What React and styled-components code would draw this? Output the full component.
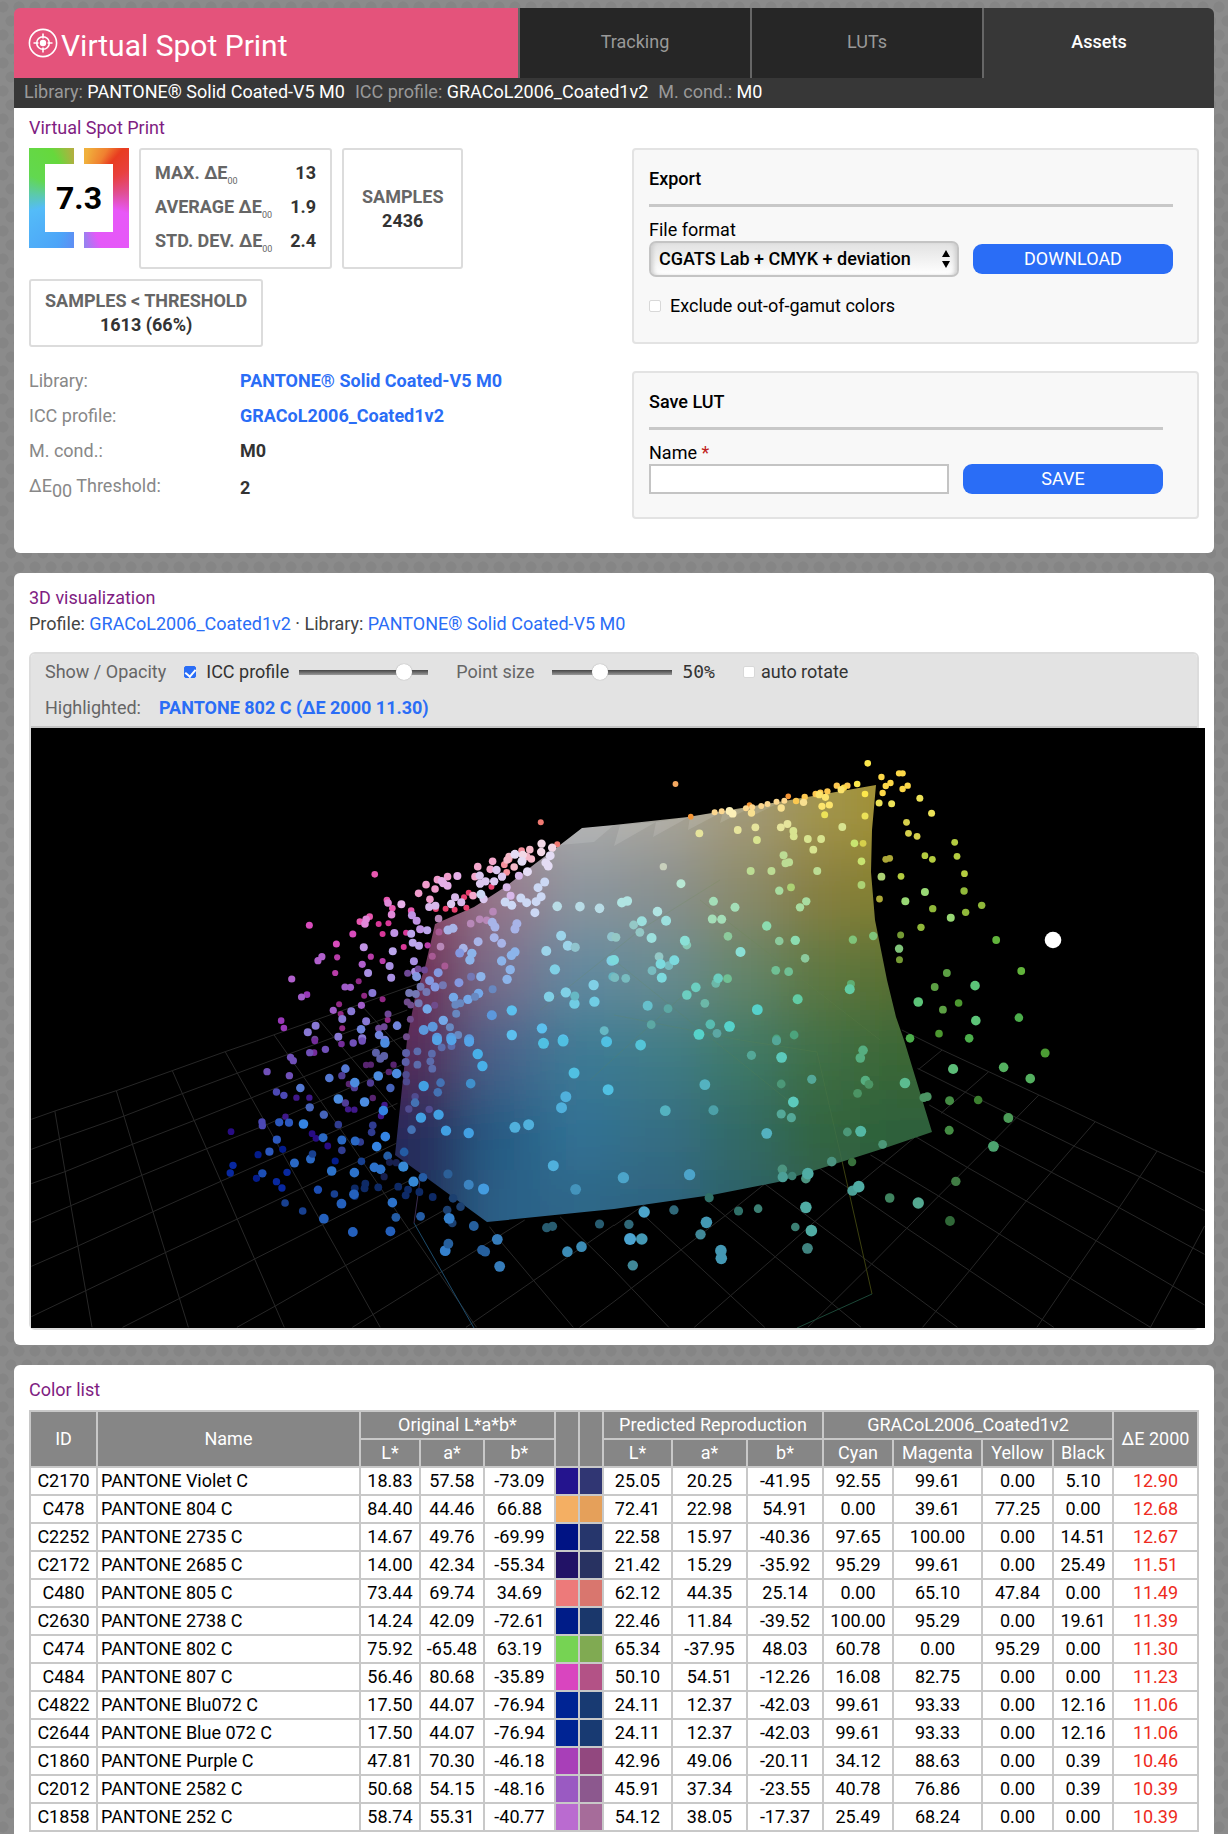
import React, { useState } from 'react'
import styled, { createGlobalStyle, css } from 'styled-components'

const GlobalStyle = createGlobalStyle`
    *{
        box-sizing: border-box;
    }
    body{
        margin: 0;
        font-family: Roboto, 'Liberation Sans', sans-serif;
        font-size: 18px;
        line-height: 26px;
        color: #000;
        background-color: #8b8b8b;
        background-image:
            radial-gradient(circle at 3px 14px, #858585 5px, transparent 6px),
            radial-gradient(circle at 19px 14px, #858585 5px, transparent 6px),
            radial-gradient(circle at 11px 0px, #858585 5px, transparent 6px),
            radial-gradient(circle at 11px 28px, #858585 5px, transparent 6px);
        background-size: 16px 28px;
        background-position: 0 -7px;
    }
    h1, h2, h3, p, dl, dd{
        margin: 0;
        font-weight: 400;
    }
    button, input, select{
        font: inherit;
    }
`

/* ---------- data ---------- */

const tabs = ['Tracking', 'LUTs', 'Assets']

const deltaStats = [
    { label: 'MAX. ΔE', value: '13' },
    { label: 'AVERAGE ΔE', value: '1.9' },
    { label: 'STD. DEV. ΔE', value: '2.4' },
]

const colors = [
    ['C2170', 'PANTONE Violet C', '18.83', '57.58', '-73.09', '#24148e', '#303673', '25.05', '20.25', '-41.95', '92.55', '99.61', '0.00', '5.10', '12.90'],
    ['C478', 'PANTONE 804 C', '84.40', '44.46', '66.88', '#f4af63', '#e5a05a', '72.41', '22.98', '54.91', '0.00', '39.61', '77.25', '0.00', '12.68'],
    ['C2252', 'PANTONE 2735 C', '14.67', '49.76', '-69.99', '#001384', '#26366c', '22.58', '15.97', '-40.36', '97.65', '100.00', '0.00', '14.51', '12.67'],
    ['C2172', 'PANTONE 2685 C', '14.00', '42.34', '-55.34', '#221266', '#283261', '21.42', '15.29', '-35.92', '95.29', '99.61', '0.00', '25.49', '11.51'],
    ['C480', 'PANTONE 805 C', '73.44', '69.74', '34.69', '#ed7a7a', '#d9766e', '62.12', '44.35', '25.14', '0.00', '65.10', '47.84', '0.00', '11.49'],
    ['C2630', 'PANTONE 2738 C', '14.24', '42.09', '-72.61', '#001c88', '#1a376b', '22.46', '11.84', '-39.52', '100.00', '95.29', '0.00', '19.61', '11.39'],
    ['C474', 'PANTONE 802 C', '75.92', '-65.48', '63.19', '#76d353', '#80aa52', '65.34', '-37.95', '48.03', '60.78', '0.00', '95.29', '0.00', '11.30'],
    ['C484', 'PANTONE 807 C', '56.46', '80.68', '-35.89', '#d945bf', '#b35286', '50.10', '54.51', '-12.26', '16.08', '82.75', '0.00', '0.00', '11.23'],
    ['C4822', 'PANTONE Blu072 C', '17.50', '44.07', '-76.94', '#002494', '#183a72', '24.11', '12.37', '-42.03', '99.61', '93.33', '0.00', '12.16', '11.06'],
    ['C2644', 'PANTONE Blue 072 C', '17.50', '44.07', '-76.94', '#002494', '#183a72', '24.11', '12.37', '-42.03', '99.61', '93.33', '0.00', '12.16', '11.06'],
    ['C1860', 'PANTONE Purple C', '47.81', '70.30', '-46.18', '#a83fb8', '#92487f', '42.96', '49.06', '-20.11', '34.12', '88.63', '0.00', '0.39', '10.46'],
    ['C2012', 'PANTONE 2582 C', '50.68', '54.15', '-48.16', '#9a5ac2', '#8c588e', '45.91', '37.34', '-23.55', '40.78', '76.86', '0.00', '0.39', '10.39'],
    ['C1858', 'PANTONE 252 C', '58.74', '55.31', '-40.77', '#ba6bd0', '#a66c9a', '54.12', '38.05', '-17.37', '25.49', '68.24', '0.00', '0.00', '10.39'],
]

// null = the name column, takes what is left
const columnWidths = [67, null, 60, 64, 71, 24, 24, 69, 75, 76, 70, 89, 71, 60, 85]

// The point cloud is kept in four tiles, 1568 x 960 units each.
// Every entry: colour, radius, then x, y pairs.
const cloud = [
    {
        x: 0, y: 720,
        points: [
            ['#f07a72', 3, 1381, 307, 1423, 373],
            ['#e858b0', 3.3, 957, 463, 988, 540, 1002, 565, 944, 590, 919, 605, 1050, 572],
            ['#d84cbc', 3.5, 790, 616, 901, 642, 859, 672],
            ['#e84070', 3, 1138, 566, 1161, 569, 1191, 563, 1185, 532, 1197, 518, 1255, 500, 1113, 567],
            ['#d83898', 3, 967, 612, 992, 610, 977, 642, 1037, 638, 1031, 681],
            ['#e088d8', 3.8, 991, 549, 935, 598, 932, 612, 1000, 584],
            ['#f09ccc', 3.8, 1088, 494, 1117, 479, 1069, 520, 1143, 470, 1111, 507, 1098, 538],
            ['#e6b0e8', 4, 1132, 490, 1143, 497, 1168, 468, 1025, 553, 1128, 483],
            ['#f4a8cc', 3.8, 1220, 440, 1258, 424, 1213, 470, 1252, 448, 1208, 527],
            ['#f6909c', 3.4, 1288, 434, 1294, 457, 1332, 392, 1300, 418],
            ['#f4b8c8', 3.8, 1300, 410, 1353, 389, 1357, 417, 1313, 441, 1295, 420, 1345, 410],
            ['#f2d8e6', 4.2, 1383, 371, 1382, 396, 1410, 383, 1335, 405],
            ['#d8b8ea', 4, 1096, 561, 1112, 557, 1178, 547, 1162, 532, 1325, 467, 1294, 502, 1304, 527],
            ['#dcc8f0', 4.2, 1268, 450, 1282, 470, 1225, 467, 1240, 484, 1226, 491, 1262, 484, 1235, 537, 1152, 552],
            ['#e4dcf4', 4.5, 1315, 403, 1333, 424, 1347, 455, 1405, 407, 1400, 438, 1394, 428],
            ['#ccd8f4', 4.5, 1228, 523, 1330, 534, 1290, 546, 1382, 530, 1374, 503, 1369, 545, 1345, 548, 1307, 556, 1391, 486, 1366, 578],
            ['#c094e4', 4, 1052, 586, 1064, 602, 1007, 639, 1073, 628, 929, 682],
            ['#bca6ec', 4, 1091, 631, 1050, 641, 1054, 668, 1070, 677, 1003, 694],
            ['#b060cc', 3.6, 822, 710, 812, 722, 925, 733, 745, 777],
            ['#b83ca8', 3.1, 861, 712, 856, 759, 947, 710, 977, 723, 1092, 676],
            ['#9838b8', 3.3, 784, 824, 718, 902, 725, 924],
            ['#a05cc8', 3.6, 770, 831, 881, 801, 895, 802, 923, 856, 851, 871],
            ['#a890e2', 4, 940, 759, 995, 738, 999, 773, 1057, 724, 1060, 755],
            ['#902884', 3, 916, 784, 930, 827, 977, 838, 866, 853, 870, 882, 874, 925, 990, 900],
            ['#8878d4', 4, 951, 819, 897, 874, 874, 897, 935, 904, 786, 937, 806, 917, 864, 950, 925, 955],
            ['#6e4896', 3.5, 991, 882, 967, 925, 981, 920, 804, 958, 1041, 760, 1068, 747, 1084, 750],
            ['#7084dc', 4.3, 922, 928, 968, 945, 983, 960, 1014, 917],
            ['#b888b8', 3.8, 1120, 596, 1202, 611, 1125, 680, 1225, 598, 1243, 601, 1259, 575],
            ['#a85a94', 3.5, 1121, 636, 1104, 709, 1136, 738],
            ['#a8b4e8', 4.5, 1144, 630, 1157, 625, 1257, 607, 1264, 621, 1262, 653, 1281, 670, 1221, 665, 1315, 627, 1320, 611, 1183, 685],
            ['#8cb4ea', 4.7, 1205, 700, 1200, 720, 1315, 696, 1306, 706, 1281, 723, 1303, 749, 1228, 770, 1295, 778],
            ['#8498e0', 4.5, 1064, 770, 1119, 758, 1097, 782, 1111, 801, 1172, 788, 1174, 699],
            ['#74a8e8', 4.7, 1222, 820, 1158, 832, 1195, 838, 1091, 867, 1132, 901],
            ['#7478b4', 4, 1203, 770, 1131, 796, 1074, 800, 1089, 816, 1045, 819, 1062, 822, 1069, 850],
            ['#6888c0', 4, 1258, 808, 1213, 830, 1175, 850, 1165, 881, 1163, 854, 1149, 922, 1170, 945],
            ['#704c8c', 3.5, 1040, 846, 1049, 855, 1110, 856, 1048, 898, 1038, 950],
            ['#5c98dc', 5, 1105, 920, 1082, 930, 1152, 953, 1116, 953, 1198, 958, 1256, 886],
            ['#5cc0ee', 5.2, 1307, 871, 1307, 945, 1384, 925, 1438, 958],
            ['#b8dce6', 4.8, 1423, 559, 1481, 560, 1531, 565],
            ['#9cd4ea', 5, 1433, 647, 1395, 693, 1450, 677],
            ['#90c4ce', 4.6, 1469, 682, 1562, 650],
            ['#80d0e6', 5.2, 1562, 722, 1417, 748, 1516, 795, 1445, 817, 1402, 830],
            ['#70cce4', 5.2, 1467, 851, 1518, 845],
            ['#66b8c4', 4.5, 1468, 828, 1543, 932, 1565, 770],
        ],
    },
    {
        x: 614, y: 720,
        points: [
            ['#f4a860', 2.9, 157, 192],
            ['#f49434', 2.8, 196, 290, 346, 255, 445, 229],
            ['#fcd890', 3, 257, 277, 275, 274, 337, 265, 353, 262, 376, 258, 392, 252, 415, 245, 435, 242],
            ['#fcc850', 3.2, 465, 243, 487, 231, 515, 222, 527, 218, 545, 214, 569, 197, 596, 197],
            ['#fce84c', 3.3, 648, 130, 621, 192, 641, 222],
            ['#fcd848', 3.2, 683, 171, 728, 160, 737, 160, 706, 189, 694, 198, 750, 197, 737, 207, 686, 219, 587, 203],
            ['#fcf0b8', 3.9, 295, 273, 303, 281],
            ['#f8e090', 3.7, 351, 279, 427, 264, 484, 247],
            ['#fce46c', 3.6, 524, 224, 540, 232, 531, 259, 550, 255, 580, 209],
            ['#ece258', 3.5, 538, 284, 641, 288, 677, 249, 709, 251, 781, 235, 811, 280],
            ['#d6d04c', 3.4, 747, 307, 752, 340, 774, 349, 636, 370],
            ['#b4cc40', 3.4, 870, 367, 876, 409, 794, 407, 813, 418, 895, 461, 733, 469],
            ['#aca838', 3.4, 694, 418, 704, 415, 678, 537],
            ['#e6e49c', 3.9, 443, 312, 426, 322, 361, 322, 316, 330, 218, 340],
            ['#d8e490', 3.9, 365, 360, 459, 349, 495, 357, 529, 357, 509, 389, 583, 321, 458, 333],
            ['#c8e470', 3.8, 614, 370, 632, 424],
            ['#bcdc94', 4, 433, 406, 447, 427, 438, 430, 402, 453, 519, 453, 349, 453],
            ['#c8d0bc', 3.7, 126, 440],
            ['#b8e8d4', 4.5, 171, 491],
            ['#acd274', 3.9, 632, 495, 452, 502, 683, 470],
            ['#98d874', 4, 794, 516, 744, 544, 860, 593],
            ['#90b83a', 3.7, 894, 513, 814, 566, 898, 577, 939, 556, 784, 622],
            ['#a8dca0', 4.2, 422, 512, 491, 544, 475, 562],
            ['#a4deb8', 4.5, 254, 544, 309, 562, 251, 597, 275, 598],
            ['#b0e4e2', 4.8, 34, 543, 20, 548, 111, 575],
            ['#9ce0de', 5, 133, 602, 71, 604, 96, 654],
            ['#94c8c6', 4.4, 50, 615, 66, 637, 5, 652, 115, 710],
            ['#8cdcb0', 4.7, 390, 618, 463, 661],
            ['#8cca9c', 4.3, 291, 649, 422, 663, 488, 715],
            ['#80c47a', 4.2, 610, 659, 662, 648, 728, 686],
            ['#749a34', 3.5, 732, 645, 729, 719],
            ['#62b43c', 3.9, 976, 660, 1040, 753],
            ['#5ca044', 3.9, 850, 759, 819, 801, 840, 869],
            ['#4c9830', 3.8, 880, 849, 830, 941],
            ['#86c8b4', 4.4, 186, 675],
            ['#8ae0d6', 5, 181, 662, 323, 696],
            ['#78bcc0', 4.4, 97, 752, 140, 737, 2, 773, 30, 775],
            ['#7cdade', 5, 154, 721, 119, 732, 0, 720, 122, 773],
            ['#70c094', 4.4, 413, 751, 446, 755, 290, 776],
            ['#6cb8a8', 4.4, 260, 790, 232, 850],
            ['#6ccec0', 4.8, 266, 775, 209, 802, 186, 825],
            ['#5fae72', 4, 605, 792],
            ['#62cca4', 5, 602, 808, 469, 838],
            ['#66c0cc', 5, 86, 857],
            ['#5ca8a4', 4.4, 138, 866, 95, 914, 263, 940],
            ['#56d2ca', 5.4, 366, 869, 295, 919, 217, 943],
            ['#58bcb0', 4.8, 246, 913],
            ['#4ca47c', 4.4, 415, 957, 460, 945],
            ['#5cc478', 4.8, 777, 846, 922, 797, 924, 902],
            ['#4cae4c', 4.3, 1034, 893, 756, 955, 907, 955],
        ],
    },
    {
        x: 0, y: 1040,
        points: [
            ['#742c9a', 3.3, 804, 3, 802, 38, 872, 12],
            ['#7050b8', 3.7, 831, 28, 902, 9, 925, 3, 791, 38, 742, 52, 749, 62, 682, 95, 739, 107],
            ['#5c60a8', 4, 960, 38, 971, 56, 981, 48, 1036, 66, 1037, 39],
            ['#582470', 3.2, 935, 75, 947, 74, 1005, 74, 993, 96, 891, 132, 952, 174],
            ['#5478d2', 4.3, 882, 86, 841, 114, 767, 144],
            ['#503c94', 3.7, 873, 107, 905, 143, 946, 129, 882, 189],
            ['#4c8ce0', 4.8, 983, 9, 906, 128, 966, 108, 1013, 101, 864, 177, 931, 186],
            ['#4664ba', 4.2, 997, 144, 791, 202, 827, 224],
            ['#4c48b4', 3.7, 706, 156, 725, 166, 669, 246, 670, 257],
            ['#40188a', 3.2, 757, 173, 790, 173, 889, 208, 905, 209, 982, 195, 973, 228, 729, 230],
            ['#280c84', 3.4, 590, 275, 797, 281, 807, 295, 837, 318],
            ['#2c58be', 4.1, 713, 247, 738, 248, 707, 299, 688, 335],
            ['#3484e2', 4.8, 775, 252, 984, 290, 979, 212, 962, 320],
            ['#303c90', 3.8, 864, 254, 952, 256, 949, 277, 873, 331, 920, 306],
            ['#2a68c4', 4.5, 825, 293, 873, 300, 907, 303, 793, 357, 752, 369],
            ['#041c8c', 3.6, 722, 328, 659, 344, 655, 415, 856, 363],
            ['#0828a0', 3.7, 595, 376, 588, 399, 706, 425, 720, 444, 733, 397],
            ['#184090', 3.8, 798, 342, 923, 364, 854, 462, 728, 489, 773, 513],
            ['#2c72ca', 4.8, 847, 393, 905, 398, 956, 382, 972, 388, 1002, 488],
            ['#1c4eb4', 4.2, 670, 400, 812, 449],
            ['#245ca4', 4.4, 990, 348, 1032, 336, 1011, 532, 1074, 529, 1080, 412],
            ['#182050', 3.6, 995, 367, 1012, 368, 981, 410],
            ['#0e2a66', 3.9, 906, 445, 906, 468, 931, 445, 933, 431, 966, 442, 1017, 440, 1042, 449, 1036, 466, 1071, 456, 1105, 471],
            ['#3688d6', 5.1, 1030, 380, 1056, 425],
            ['#2460bc', 4.9, 904, 463, 872, 491, 827, 536, 901, 576, 997, 574],
            ['#1c4070', 4.3, 1142, 510, 1155, 549, 1176, 500, 1157, 475],
            ['#3480cc', 5.4, 1147, 535, 1137, 632],
            ['#26609e', 4.9, 1210, 558, 1145, 611, 1231, 630, 1239, 635],
            ['#367cba', 5.4, 1270, 598, 1276, 679],
            ['#285c70', 4.6, 1396, 563, 1411, 559, 1531, 552],
            ['#3c8cb6', 5.3, 1449, 635, 1485, 620],
            ['#5c6cac', 3.9, 1066, 34, 1103, 41, 1128, 22, 1153, 18, 1099, 64, 1104, 86, 1066, 74],
            ['#54a4e8', 5, 1116, 1, 1153, 1, 1198, 5],
            ['#504c90', 3.7, 1037, 104, 1038, 125, 1060, 170, 1044, 207, 1096, 208],
            ['#48b0e8', 5.2, 1220, 42, 1232, 78],
            ['#4472b4', 4.3, 1125, 128, 1118, 157, 1051, 269, 1060, 188],
            ['#42a0e2', 5.2, 1082, 138, 1075, 233, 1120, 224, 1139, 272, 1197, 279],
            ['#4090cc', 4.8, 1202, 131],
            ['#50b0dc', 5.5, 1315, 262, 1350, 254, 1445, 170, 1434, 203, 1413, 377],
            ['#50c0e2', 5.5, 1388, 10, 1438, 3, 1549, 5, 1466, 99, 1553, 149],
            ['#2c6098', 4.6, 1144, 402],
            ['#3c84c0', 5, 1197, 434],
            ['#449ce0', 5.6, 1235, 447],
            ['#4494bc', 5.4, 1470, 448],
        ],
    },
    {
        x: 614, y: 1040,
        points: [
            ['#54c4d8', 5.4, 68, 15],
            ['#54a898', 4.6, 351, 46, 415, 2, 505, 118, 427, 222, 453, 233],
            ['#5ccabc', 5.4, 428, 52, 458, 186],
            ['#54b2c0', 5.4, 232, 134, 131, 212, 390, 280],
            ['#4ca0a8', 5, 254, 211],
            ['#4c9878', 4.4, 427, 132, 596, 276, 686, 313],
            ['#56ae80', 4.8, 636, 31, 629, 54, 642, 122],
            ['#4c9464', 4.4, 651, 133, 622, 160, 791, 173, 800, 170],
            ['#5cbc90', 5.3, 743, 129],
            ['#54b8a4', 5.5, 630, 274],
            ['#4ca4ca', 5.7, 24, 413, 193, 404, 77, 516],
            ['#4c9480', 4.8, 556, 365, 430, 388, 490, 416],
            ['#38703c', 4.2, 608, 366],
            ['#3c8074', 4.3, 455, 408, 463, 561, 368, 506],
            ['#4ca098', 5.2, 431, 411, 609, 452],
            ['#50aca4', 5.8, 495, 401, 625, 440, 490, 502, 504, 572],
            ['#408460', 4.8, 704, 474],
            ['#54a890', 5.7, 777, 489],
            ['#306838', 4.9, 858, 543],
            ['#407c44', 4.7, 873, 424],
            ['#408480', 5.4, 494, 625],
            ['#307068', 4.6, 318, 513, 243, 473],
            ['#306878', 4.7, 153, 510, 38, 553],
            ['#4498b4', 5.8, 236, 547, 71, 597, 273, 632, 274, 655],
            ['#408898', 5.2, 221, 583, 48, 676],
            ['#4ca4d0', 6, 41, 597],
            ['#5cbc78', 5.1, 866, 87],
            ['#54b060', 4.8, 995, 82, 1063, 116],
            ['#4c9c34', 4.5, 1101, 39],
            ['#448c44', 4.5, 857, 182, 856, 271],
            ['#3c8030', 4.3, 930, 180],
            ['#4c9c58', 4.9, 1007, 234],
            ['#4ca470', 5.4, 969, 319],
        ],
    },
]

const floorLines = [
    {
        x: 0, y: 1040,
        paths: [
            'M80 238L140 213L297 152L440 92L575 35L655 3L1070 -170',
            'M80 328L151 297L317 228L463 162L605 100L1040 -90',
            'M80 431L166 395L338 313L497 241L641 174L1030 -10',
            'M80 547L181 497L362 406L528 326L681 254L1025 75',
            'M80 679L199 618L389 516L564 424L1015 190',
            'M80 830L219 752L422 638L606 537L1012 310',
            'M313 862L459 775L652 656L1062 412',
            'M605 862L703 798L882 677L1150 500',
            'M900 862L1340 540', 'M1190 862L1568 555', 'M1480 862L1568 785',
            'M140 213L181 497L235 862', 'M297 152L362 406L481 862',
            'M440 92L564 424L726 862', 'M575 35L722 340L971 862',
            'M700 -15L880 285L1045 570L1217 862', 'M815 -60L1010 210',
            'M930 -95L1035 40', 'M1250 560L1284 612L1464 862', 'M1430 530L1568 690',
        ],
    },
    {
        x: 614, y: 1040,
        paths: [
            'M0 557L120 460', 'M0 785L284 527L385 432', 'M205 862L412 650L565 490L770 290',
            'M495 862L658 672L829 468L968 305L1085 165', 'M788 862L908 692L1055 480L1229 245',
            'M1080 862L1165 715L1290 503L1387 333', 'M1370 862L1427 738L1508 558',
            'M778 88L838 30', 'M835 220L957 95',
            'M735 -30L838 30L957 95L1085 165L1229 245L1387 333L1508 398',
            'M775 85L1031 235L1178 320L1342 410L1508 512', 'M805 195L968 305L1290 503L1508 643',
            'M770 290L902 382L1231 602L1427 738L1508 795', 'M655 345L829 468L1165 715L1370 862',
            'M525 385L748 565L1123 862', 'M385 432L658 672L877 862', 'M235 480L631 862',
            'M80 530L385 862', 'M0 690L140 862',
        ],
    },
]

// surface colours of the gamut body, one per 80px patch, blurred together
const gamutPatches = [
    ['#9a8088', '#a89ca0', '#acacac', '#a8a59c', '#a39a78', '#a2944c', '#a08f2c'],
    ['#8c3a60', '#98788c', '#8c969e', '#8a9090', '#8b8b6c', '#877f40', '#84802c'],
    ['#702c54', '#7a6f8c', '#628aa0', '#698c92', '#65856a', '#5f7840', '#5a7030'],
    ['#562c58', '#48648c', '#3c7a94', '#3f7d88', '#3f7a68', '#3f6f44', '#3a6634'],
    ['#262c5a', '#285c84', '#327294', '#346e84', '#306a66', '#30653e', '#2f603a'],
    ['#222c58', '#2a6088', '#2e6688', '#2e6480', '#2e6068', '#2e5f50', '#2c5a3c'],
]

const gamutOutline = 'M582 828L560 845L536 863L505 887L474 907L435 924L425 967L415 997L407 1040L395 1155L420 1173L487 1222L614 1209L712 1195L778 1182L841 1162L888 1147L932 1132L904 1040L896 1017L887 980L875 920L871 872L872 830L876 785L790 800L688 817L614 825Z'

/* ---------- drawings ---------- */

function TargetIcon() {
    return (
        <svg width="30" height="30" viewBox="0 0 30 30" fill="none" stroke="#fff" strokeWidth="1.6" aria-hidden="true">
            <circle cx="15" cy="15" r="13.6" />
            <circle cx="15" cy="15" r="6.3" />
            <circle cx="15" cy="15" r="3.2" fill="#fff" stroke="none" />
            <path d="M15 5.5v5M15 19.5v5M5.5 15h5M19.5 15h5" />
        </svg>
    )
}

function toScene(tile, x, y) {
    return [tile.x + x * 614 / 1568, tile.y + y / 3]
}

function GamutScene() {
    return (
        <Scene viewBox="31 728 1174 600" preserveAspectRatio="xMidYMid slice" role="img" aria-label="3D gamut">
            <defs>
                <clipPath id="gamut"><path d={gamutOutline} /></clipPath>
                <filter id="soft" x="-20%" y="-20%" width="140%" height="140%">
                    <feGaussianBlur stdDeviation="28" />
                </filter>
            </defs>
            <rect x="-400" y="728" width="2200" height="600" fill="#000" />
            {floorLines.map((tile) => (
                <g key={tile.x} transform={`translate(${tile.x} ${tile.y}) scale(${614 / 1568} ${1 / 3})`}>
                    {tile.paths.map((d) => (
                        <path key={d} d={d} fill="none" stroke="#272727" strokeWidth="1" vectorEffect="non-scaling-stroke" />
                    ))}
                </g>
            ))}
            <path d="M421 1173L414 1223" stroke="#3a2c50" fill="none" />
            <path d="M414 1223L474 1328" stroke="#1d4c6c" fill="none" />
            <path d="M842 1161L872 1294" stroke="#3c4010" fill="none" />
            <path d="M872 1294L797 1328" stroke="#1c4838" fill="none" />
            <g clipPath="url(#gamut)">
                <g filter="url(#soft)">
                    {gamutPatches.map((row, r) => row.map((fill, c) => {
                        const left = c === 0 ? 280 : 380 + c * 80
                        const top = r === 0 ? 670 : 770 + r * 80
                        return (
                            <rect
                                key={`${r}-${c}`}
                                x={left}
                                y={top}
                                width={c === 0 || c === 6 ? 181 : 81}
                                height={r === 0 || r === 5 ? 181 : 81}
                                fill={fill}
                            />
                        )
                    }))}
                </g>
                <path d="M560 845L582 828L614 825L594 842ZM614 846L620 825L656 822ZM653 837L656 822L689 817ZM688 830L690 816L722 812ZM720 823L723 812L752 807ZM752 816L755 806L785 800Z" fill="#fff" opacity=".12" />
                <path d="M614 1015L740 1040L817 1052L842 1161M614 960L800 1110M700 900L880 1040M540 1010L640 930L720 880M590 1080L700 980" stroke="#6a8a50" opacity=".18" fill="none" />
            </g>
            {cloud.map((tile) => tile.points.map(([fill, r, ...xy]) => (
                <g key={`${tile.x}-${tile.y}-${fill}-${r}`} fill={fill}>
                    {xy.map((x, i) => {
                        if (i % 2) return null
                        const [cx, cy] = toScene(tile, x, xy[i + 1])
                        return <circle key={i} cx={cx} cy={cy} r={r} />
                    })}
                </g>
            )))}
            <circle cx="1053" cy="940" r="8.3" fill="#fff" />
        </Scene>
    )
}

/* ---------- sections ---------- */

function Header() {
    const [active, setActive] = useState('Assets')
    return (
        <>
            <HeaderStyled>
                <Brand>
                    <TargetIcon />
                    <h1>Virtual Spot Print</h1>
                </Brand>
                <Tabs>
                    {tabs.map((tab) => (
                        <Tab key={tab} href="#" $active={active === tab} onClick={() => setActive(tab)}>
                            {tab}
                        </Tab>
                    ))}
                </Tabs>
            </HeaderStyled>
            <InfoBar>
                <span>Library: <b>PANTONE® Solid Coated-V5 M0</b></span>
                <span>ICC profile: <b>GRACoL2006_Coated1v2</b></span>
                <span>M. cond.: <b>M0</b></span>
            </InfoBar>
        </>
    )
}

function Summary() {
    return (
        <div>
            <Stats>
                <Score><span>7.3</span></Score>
                <DeltaBox>
                    {deltaStats.map((item) => (
                        <DeltaRow key={item.label}>
                            <StatLabel>{item.label}<sub>00</sub></StatLabel>
                            <StatValue>{item.value}</StatValue>
                        </DeltaRow>
                    ))}
                </DeltaBox>
                <CountBox $wide>
                    <StatLabel>SAMPLES</StatLabel>
                    <StatValue>2436</StatValue>
                </CountBox>
                <CountBox>
                    <StatLabel>SAMPLES &lt; THRESHOLD</StatLabel>
                    <StatValue>1613 (66%)</StatValue>
                </CountBox>
            </Stats>
            <Details>
                <dt>Library:</dt>
                <dd><a href="#">PANTONE® Solid Coated-V5 M0</a></dd>
                <dt>ICC profile:</dt>
                <dd><a href="#">GRACoL2006_Coated1v2</a></dd>
                <dt>M. cond.:</dt>
                <dd>M0</dd>
                <dt>ΔE<sub>00</sub> Threshold:</dt>
                <dd>2</dd>
            </Details>
        </div>
    )
}

function Forms() {
    return (
        <FormColumn>
            <FormBox $right={24}>
                <h3>Export</h3>
                <hr />
                <FieldLabel htmlFor="format">File format</FieldLabel>
                <FieldRow>
                    <SelectWrap>
                        <Select id="format">
                            <option>CGATS Lab + CMYK + deviation</option>
                        </Select>
                        <svg width="10" height="20" viewBox="0 0 10 20" aria-hidden="true">
                            <path d="M5 1L9 8H1ZM5 19L1 12H9Z" fill="#000" />
                        </svg>
                    </SelectWrap>
                    <Button type="button">DOWNLOAD</Button>
                </FieldRow>
                <CheckLabel>
                    <Checkbox type="checkbox" />
                    Exclude out-of-gamut colors
                </CheckLabel>
            </FormBox>
            <FormBox $right={34}>
                <h3>Save LUT</h3>
                <hr />
                <FieldLabel htmlFor="lut-name">Name <em>*</em></FieldLabel>
                <FieldRow>
                    <TextInput id="lut-name" type="text" />
                    <Button type="button">SAVE</Button>
                </FieldRow>
            </FormBox>
        </FormColumn>
    )
}

function Visualization() {
    const [opacity, setOpacity] = useState(86)
    const [size, setSize] = useState(38)
    return (
        <Card>
            <SectionTitle>3D visualization</SectionTitle>
            <Intro>
                Profile: <a href="#">GRACoL2006_Coated1v2</a> · Library: <a href="#">PANTONE® Solid Coated-V5 M0</a>
            </Intro>
            <Viewer>
                <Toolbar>
                    <ToolRow>
                        <ToolName>Show / Opacity</ToolName>
                        <ToolCheck>
                            <Checkbox type="checkbox" defaultChecked />
                            ICC profile
                        </ToolCheck>
                        <Slider
                            type="range"
                            aria-label="ICC profile opacity"
                            $width={129}
                            value={opacity}
                            onChange={(e) => setOpacity(e.target.value)}
                        />
                        <PointSize>
                            <label htmlFor="point-size">Point size</label>
                            <Slider
                                id="point-size"
                                type="range"
                                $width={120}
                                value={size}
                                onChange={(e) => setSize(e.target.value)}
                            />
                            <output>50%</output>
                        </PointSize>
                        <ToolCheck $tight>
                            <Checkbox type="checkbox" />
                            auto rotate
                        </ToolCheck>
                    </ToolRow>
                    <ToolRow>
                        <ToolName>Highlighted:</ToolName>
                        <b>PANTONE 802 C (ΔE 2000 11.30)</b>
                    </ToolRow>
                </Toolbar>
                <GamutScene />
            </Viewer>
        </Card>
    )
}

function ColorRow({ color }) {
    return (
        <tr>
            {color.map((value, i) => {
                if (i === 5 || i === 6) return <Swatch key={i} $color={value} />
                if (i === 1) return <NameCell key={i}>{value}</NameCell>
                if (i === 14) return <ErrorCell key={i}>{value}</ErrorCell>
                return <td key={i}>{value}</td>
            })}
        </tr>
    )
}

function ColorList() {
    return (
        <Card>
            <SectionTitle>Color list</SectionTitle>
            <ColorTable>
                <colgroup>
                    {columnWidths.map((width, i) => <col key={i} width={width || undefined} />)}
                </colgroup>
                <thead>
                    <tr>
                        <th rowSpan="2">ID</th>
                        <th rowSpan="2">Name</th>
                        <th colSpan="3">Original L*a*b*</th>
                        <th rowSpan="2" />
                        <th rowSpan="2" />
                        <th colSpan="3">Predicted Reproduction</th>
                        <th colSpan="4">GRACoL2006_Coated1v2</th>
                        <th rowSpan="2">ΔE 2000</th>
                    </tr>
                    <tr>
                        {['L*', 'a*', 'b*', 'L*', 'a*', 'b*', 'Cyan', 'Magenta', 'Yellow', 'Black'].map((name, i) => (
                            <th key={i}>{name}</th>
                        ))}
                    </tr>
                </thead>
                <tbody>
                    {colors.map((color) => <ColorRow key={color[0]} color={color} />)}
                </tbody>
            </ColorTable>
        </Card>
    )
}

function App() {
    return (
        <Page>
            <GlobalStyle />
            <div>
                <Header />
                <TopCard>
                    <SectionTitle>Virtual Spot Print</SectionTitle>
                    <Columns>
                        <Summary />
                        <Forms />
                    </Columns>
                </TopCard>
            </div>
            <Visualization />
            <ColorList />
        </Page>
    )
}

/* ---------- styles ---------- */

const Page = styled.main`
    padding: 8px 14px 0;
    display: flex;
    flex-direction: column;
    gap: 20px;
`

const HeaderStyled = styled.header`
    display: flex;
    height: 70px;
    border-radius: 6px 6px 0 0;
    overflow: hidden;
`

const Brand = styled.div`
    flex: 1;
    display: flex;
    align-items: center;
    gap: 3px;
    padding-left: 14px;
    color: #fff;
    background: #e4537b;
    h1{
        font-size: 30px;
        line-height: 40px;
        padding-top: 6px;
    }
`

const Tabs = styled.nav`
    width: 58%;
    display: flex;
`

const Tab = styled.a`
    flex: 1;
    display: flex;
    align-items: center;
    justify-content: center;
    padding-bottom: 3px;
    border-left: 2px solid #666;
    text-decoration: none;
    color: #999;
    background: #262626;
    ${({ $active }) => $active && css`
        color: #fff;
        font-weight: 500;
        background: #373737;
    `}
`

const InfoBar = styled.div`
    display: flex;
    gap: 10px;
    height: 30px;
    padding: 1px 10px;
    color: #999;
    background: #373737;
    b{
        font-weight: 400;
        color: #fff;
    }
`

const Card = styled.section`
    padding: 12px 15px 15px;
    border-radius: 6px;
    background: #fff;
`

const TopCard = styled(Card)`
    padding: 7px 15px 34px;
    border-radius: 0 0 6px 6px;
`

const SectionTitle = styled.h2`
    font-size: 18px;
    color: #7f1d82;
`

const Columns = styled.div`
    display: grid;
    grid-template-columns: 603fr 567fr;
    margin-top: 7px;
`

const Stats = styled.div`
    display: flex;
    flex-wrap: wrap;
    align-items: flex-start;
    gap: 10px;
`

const Score = styled.div`
    width: 100px;
    height: 100px;
    padding: 16px;
    background:
        linear-gradient(#fff, #fff) center / 10px 100% no-repeat,
        conic-gradient(
            #f0b03c 10deg, #f08030 30deg, #e83c20 42deg, #e84040 60deg, #e04f9a 85deg,
            #e858f8 108deg, #e458f8 155deg, #9a80f0 172deg, #5c90f4 188deg, #4ca4f8 205deg,
            #54bcf8 255deg, #5ccaa8 275deg, #62d850 295deg, #66d83c 330deg, #b0b040 352deg
        );
    span{
        display: flex;
        align-items: center;
        justify-content: center;
        height: 100%;
        font-size: 32px;
        font-weight: 700;
        background: #fff;
    }
`

const StatBox = styled.div`
    border: 2px solid #dcdcdc;
    border-radius: 3px;
    font-weight: 700;
`

const DeltaBox = styled(StatBox)`
    width: 193px;
    padding: 6px 14px 9px;
`

const DeltaRow = styled.div`
    display: flex;
    justify-content: space-between;
    line-height: 34px;
    sub{
        font-size: 9px;
        font-weight: 400;
        line-height: 9px;
    }
`

const CountBox = styled(StatBox)`
    display: flex;
    flex-direction: column;
    justify-content: center;
    align-items: center;
    line-height: 24px;
    padding: 8px 14px;
    ${({ $wide }) => $wide && css`
        padding: 8px 18px;
        align-self: stretch;
    `}
`

const StatLabel = styled.span`
    color: #666;
`

const StatValue = styled.span`
    color: #333;
`

const Details = styled.dl`
    display: grid;
    grid-template-columns: 211px 1fr;
    align-items: center;
    row-gap: 9px;
    margin-top: 21px;
    dt{
        color: #888;
    }
    dt sub{
        font-size: 18px;
    }
    dd{
        font-weight: 700;
        color: #333;
    }
    a{
        color: #2a6df6;
        text-decoration: none;
    }
`

const FormColumn = styled.div`
    display: flex;
    flex-direction: column;
    gap: 27px;
`

const FormBox = styled.form`
    padding: 16px ${({ $right }) => $right}px 23px 15px;
    border: 2px solid #e3e3e3;
    border-radius: 4px;
    background: #f8f8f8;
    h3{
        font-size: 18px;
        font-weight: 500;
    }
    hr{
        height: 3px;
        margin: 12px 0;
        border: 0;
        background: #c8c8c8;
    }
`

const FieldLabel = styled.label`
    display: block;
    line-height: 22px;
    em{
        font-style: normal;
        color: #c02020;
    }
`

const FieldRow = styled.div`
    display: flex;
    align-items: center;
    gap: 14px;
`

const SelectWrap = styled.div`
    flex: 1;
    min-width: 0;
    display: flex;
    align-items: center;
    height: 36px;
    padding-right: 6px;
    border: 2px solid #c4c4c4;
    border-radius: 7px;
    background: linear-gradient(#e2e2e2, #fff);
    box-shadow: inset 4px 0 4px -2px #ccc, inset -4px 0 4px -2px #ccc;
`

const Select = styled.select`
    flex: 1;
    min-width: 0;
    appearance: none;
    padding: 0 8px;
    border: 0;
    font-weight: 500;
    color: #000;
    background: none;
`

const TextInput = styled.input`
    flex: 1;
    min-width: 0;
    height: 30px;
    border: 2px solid #c4c4c4;
    background: #fff;
`

const Button = styled.button`
    width: 200px;
    height: 30px;
    padding: 0;
    border: 0;
    border-radius: 9px;
    color: #fff;
    background: #2a6df6;
`

const Checkbox = styled.input`
    appearance: none;
    flex: none;
    display: grid;
    place-items: center;
    width: 12px;
    height: 12px;
    margin: 0;
    border: 1px solid #d8d8d8;
    border-radius: 2px;
    background: #fff;
    &:checked{
        border-color: #2a6df6;
        background: #2a6df6;
    }
    &:checked::after{
        content: '';
        width: 5px;
        height: 8px;
        border: solid #fff;
        border-width: 0 2px 2px 0;
        transform: rotate(40deg);
    }
`

const CheckLabel = styled.label`
    display: flex;
    align-items: center;
    gap: 9px;
    margin-top: 16px;
`

const Intro = styled.p`
    margin-bottom: 15px;
    color: #444;
    a{
        color: #2a6df6;
        text-decoration: none;
    }
`

const Viewer = styled.div`
    border: 2px solid #dcdcdc;
    border-radius: 6px;
`

const Toolbar = styled.div`
    padding: 0 14px;
    color: #333;
    background: #e3e3e3;
    border-bottom: 2px solid #c4c4c4;
    border-radius: 4px 4px 0 0;
`

const ToolRow = styled.div`
    display: flex;
    align-items: center;
    height: 36px;
    b{
        font-weight: 700;
        color: #2a6df6;
    }
`

const ToolName = styled.span`
    margin-right: 18px;
    color: #666;
`

const ToolCheck = styled.label`
    display: flex;
    align-items: center;
    gap: ${({ $tight }) => ($tight ? 6 : 10)}px;
    margin-right: 10px;
`

const PointSize = styled.div`
    display: flex;
    align-items: center;
    margin: 0 28px;
    label{
        margin-right: 18px;
        color: #666;
    }
    output{
        margin-left: 10px;
        font-family: 'DejaVu Sans Mono', monospace;
        font-size: 18px;
    }
`

const Slider = styled.input`
    appearance: none;
    width: ${({ $width }) => $width}px;
    height: 16px;
    margin: 0;
    background: linear-gradient(#444, #999) center / 100% 5px no-repeat;
    &::-webkit-slider-thumb{
        appearance: none;
        width: 16px;
        height: 16px;
        border-radius: 50%;
        background: #fff;
        box-shadow: 0 0 1px #888;
    }
`

const Scene = styled.svg`
    display: block;
    width: calc(100% + 8px);
    height: 600px;
`

const ColorTable = styled.table`
    width: 100%;
    margin-top: 7px;
    table-layout: fixed;
    border-collapse: collapse;
    text-align: center;
    th, td{
        height: 28px;
        padding: 0;
        line-height: 26px;
        border: 2px solid #c8c8c8;
    }
    th{
        font-weight: 400;
        color: #fff;
        background: #868686;
    }
`

const NameCell = styled.td`
    text-align: left;
    text-indent: 3px;
`

const ErrorCell = styled.td`
    color: #ee2a20;
`

const Swatch = styled.td`
    background: ${({ $color }) => $color};
`

export default App
